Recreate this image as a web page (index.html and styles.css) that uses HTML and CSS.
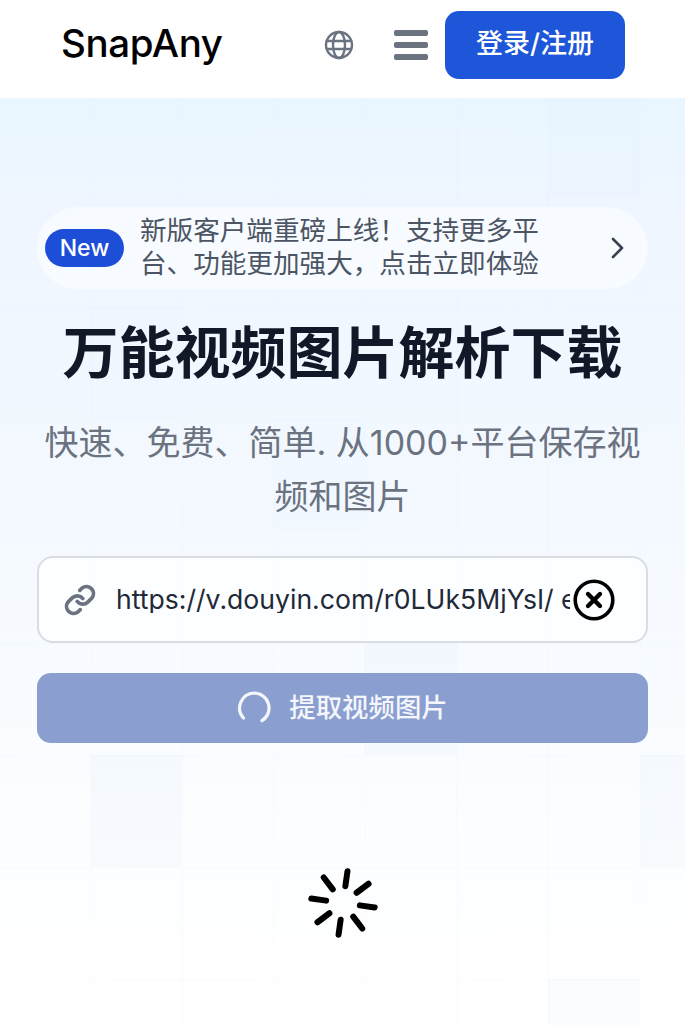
FILE: index.html
```html
<!DOCTYPE html>
<html lang="zh-CN">
<head>
    <meta charset="UTF-8">
    <meta name="viewport" content="width=device-width, initial-scale=1.0">
    <title>SnapAny</title>
    <link rel="stylesheet" href="styles.css">
</head>
<body>
    <header class="site-header">
        <a class="logo" href="#">SnapAny</a>
        <button class="icon-btn globe" aria-label="Language">
            <svg width="30" height="30" viewBox="0 0 30 30" fill="none" stroke="#6b7280" stroke-width="2.4">
                <circle cx="15" cy="15" r="13"/>
                <ellipse cx="15" cy="15" rx="6" ry="13"/>
                <path d="M2 11h26M2 19h26"/>
            </svg>
        </button>
        <button class="icon-btn menu" aria-label="Menu">
            <span></span><span></span><span></span>
        </button>
        <a class="login" href="#">登录/注册</a>
    </header>

    <main class="hero">
        <!-- Faint tiles behind the content -->
        <div class="tiles">
            <i class="tile faint c7 r1"></i>
            <i class="tile faint c2 r3"></i>
            <i class="tile faint c4 r4"></i>
            <i class="tile c5 r6"></i>
            <i class="tile c2 r7"></i>
            <i class="tile c8 r7"></i>
            <i class="tile c7 r9"></i>
        </div>

        <a class="notice" href="#">
            <span class="badge">New</span>
            <span class="notice-text">新版客户端重磅上线&#xFF01;支持更多平台、功能更加强大&#xFF0C;点击立即体验</span>
            <svg class="chevron" width="14" height="24" viewBox="0 0 14 24" fill="none" stroke="#374151" stroke-width="2.6" stroke-linecap="round" stroke-linejoin="round">
                <path d="M3 3l9 9-9 9"/>
            </svg>
        </a>

        <h1>万能视频图片解析下载</h1>
        <p class="subtitle">快速、免费、简单. 从1000+平台保存视频和图片</p>

        <div class="url-box">
            <svg class="link-icon" width="34" height="34" viewBox="0 0 24 24" fill="none" stroke="#6b7280" stroke-width="2.6" stroke-linecap="round" stroke-linejoin="round">
                <path d="M10 13a5 5 0 0 0 7.5.5l3-3a5 5 0 0 0-7-7l-1.7 1.7"/>
                <path d="M14 11a5 5 0 0 0-7.5-.5l-3 3a5 5 0 0 0 7 7l1.7-1.7"/>
            </svg>
            <input class="url-input" type="text" value="https://v.douyin.com/r0LUk5MjYsI/ e8 复制此链接">
            <svg class="clear" width="42" height="42" viewBox="0 0 42 42" fill="none" stroke="#000">
                <circle cx="21" cy="21" r="18.8" stroke-width="3.6"/>
                <path d="M15 15l12 12M27 15L15 27" stroke-width="4.4" stroke-linecap="round"/>
            </svg>
        </div>

        <button class="submit">
            <svg width="34" height="34" viewBox="0 0 34 34" fill="none" stroke="#f4f6fb" stroke-width="3.2" stroke-linecap="round">
                <path d="M6.5 27A15 15 0 0 1 17 2a15 15 0 0 1 8 27.7"/>
            </svg>
            <span class="submit-label">提取视频图片</span>
        </button>

        <svg class="loader" width="72" height="72" viewBox="0 0 72 72" stroke="#000" stroke-width="6" stroke-linecap="round">
            <g transform="rotate(8 36 36)">
                <path d="M36 4v15"/>
                <path d="M36 4v15" transform="rotate(45 36 36)"/>
                <path d="M36 4v15" transform="rotate(90 36 36)"/>
                <path d="M36 4v15" transform="rotate(135 36 36)"/>
                <path d="M36 4v15" transform="rotate(180 36 36)"/>
                <path d="M36 4v15" transform="rotate(225 36 36)"/>
                <path d="M36 4v15" transform="rotate(270 36 36)"/>
                <path d="M36 4v15" transform="rotate(315 36 36)"/>
            </g>
        </svg>
    </main>
</body>
</html>
```

FILE: styles.css
```css
* {
    box-sizing: border-box;
}

body {
    margin: 0;
    height: 1025px;
    overflow: hidden;
    font-family: Inter, "Noto Sans CJK SC", sans-serif;
    background-color: #fff;
    color: #111827;
}

a {
    text-decoration: none;
}

button {
    font-family: inherit;
    border: none;
    background: none;
    padding: 0;
}

/* Header */
.site-header {
    height: 98px;
    display: flex;
    align-items: center;
    padding: 0 60px 8px 61px;
    background-color: #fff;
}

.logo {
    font-size: 38.5px;
    font-weight: 500;
    line-height: 46px;
    padding-bottom: 4px;
    color: #000;
    letter-spacing: -0.4px;
    margin-right: auto;
}

.icon-btn {
    display: flex;
}

.globe {
    margin-right: 40px;
}

.menu {
    width: 34px;
    flex-direction: column;
    gap: 6px;
    margin-right: 17px;
}

.menu span {
    height: 6px;
    border-radius: 2px;
    background-color: #6b7280;
}

.login {
    width: 180px;
    height: 68px;
    padding-bottom: 7px;
    border-radius: 14px;
    background-color: #1d56d8;
    color: #fff;
    font-size: 27px;
    font-weight: 500;
    display: flex;
    align-items: center;
    justify-content: center;
}

/* Hero */
.hero {
    position: relative;
    height: 927px;
    padding: 109px 37px 0;
    background: linear-gradient(#e9f6ff, #eff6ff 12%, #f4f9ff 45%, #fdfeff 85%, #fff);
    overflow: hidden;
    text-align: center;
}

.tiles {
    position: absolute;
    left: -1px;
    top: -15px;
    width: 732px;
    height: 1008px;
    display: grid;
    grid-template-columns: repeat(8, 91.5px);
    grid-template-rows: repeat(9, 112px);
    background-image:
        linear-gradient(to right, rgba(200, 215, 235, 0.08) 1px, transparent 1px),
        linear-gradient(to bottom, rgba(200, 215, 235, 0.08) 1px, transparent 1px);
    background-size: 91.5px 112px;
}

.tile {
    background-color: rgba(190, 215, 245, 0.08);
}

.tile.faint {
    background-color: rgba(190, 225, 245, 0.03);
}

.c2 { grid-column: 2; }
.c4 { grid-column: 4; }
.c5 { grid-column: 5; }
.c7 { grid-column: 7; }
.c8 { grid-column: 8; }
.r1 { grid-row: 1; }
.r3 { grid-row: 3; }
.r4 { grid-row: 4; }
.r6 { grid-row: 6; }
.r7 { grid-row: 7; }
.r9 { grid-row: 9; }

.notice {
    position: relative;
    height: 82px;
    border-radius: 41px;
    display: flex;
    align-items: center;
    padding: 0 24px 0 8px;
    background-color: rgba(255, 255, 255, 0.5);
    text-align: left;
}

.badge {
    width: 79px;
    height: 38px;
    flex: none;
    border-radius: 19px;
    background-color: #1d4ed8;
    color: #fff;
    font-size: 23px;
    font-weight: 500;
    line-height: 38px;
    text-align: center;
}

.notice-text {
    width: 402px;
    margin-left: 16px;
    padding-bottom: 3px;
    font-size: 26.6px;
    line-height: 33px;
    color: #4b5563;
}

.chevron {
    margin-left: auto;
}

h1 {
    position: relative;
    margin: 30px 0 0;
    font-size: 56px;
    font-weight: 700;
    line-height: 68px;
    white-space: nowrap;
    color: #111827;
}

.subtitle {
    position: relative;
    margin: 29px 0 0;
    font-size: 34px;
    line-height: 54px;
    color: #6b7280;
}

.url-box {
    position: relative;
    height: 87px;
    margin-top: 32px;
    border: 2px solid #d9dce2;
    border-radius: 16px;
    background-color: rgba(255, 255, 255, 0.75);
    display: flex;
    align-items: center;
    padding: 0 31px 0 24px;
}

.link-icon {
    flex: none;
}

.url-input {
    flex: 1;
    min-width: 0;
    margin: 0 3px 5px 19px;
    padding: 0;
    border: none;
    outline: none;
    background: none;
    font-family: Inter, sans-serif;
    font-size: 26.6px;
    color: #1f2937;
}

.clear {
    flex: none;
}

.submit {
    position: relative;
    width: 100%;
    height: 70px;
    margin-top: 30px;
    border-radius: 14px;
    background-color: #8a9fd0;
    color: #f4f6fb;
    font-size: 26.4px;
    font-weight: 500;
    display: flex;
    align-items: center;
    justify-content: center;
    gap: 18px;
}

.submit-label {
    padding-bottom: 5px;
}

.loader {
    position: relative;
    display: block;
    margin: 124px auto 0;
}
```
